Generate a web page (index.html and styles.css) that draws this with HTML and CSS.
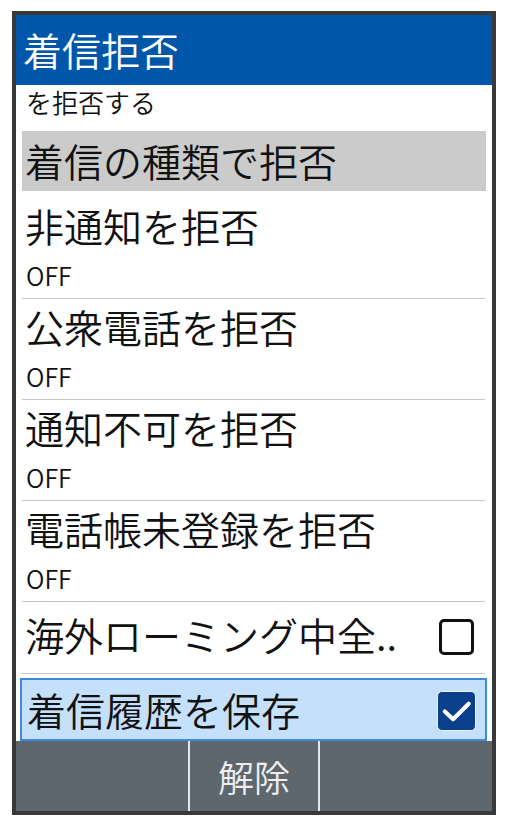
FILE: index.html
```html
<!DOCTYPE html>
<html lang="ja">
<head>
<meta charset="utf-8">
<title>着信拒否</title>
<link rel="stylesheet" href="styles.css">
</head>
<body>
<div class="phone">
  <header class="title-bar">着信拒否</header>
  <div class="list">
    <div class="desc">を拒否する</div>
    <div class="category">着信の種類で拒否</div>
    <div class="item">
      <div class="item-title">非通知を拒否</div>
      <div class="item-value">OFF</div>
    </div>
    <div class="item">
      <div class="item-title">公衆電話を拒否</div>
      <div class="item-value">OFF</div>
    </div>
    <div class="item">
      <div class="item-title">通知不可を拒否</div>
      <div class="item-value">OFF</div>
    </div>
    <div class="item">
      <div class="item-title">電話帳未登録を拒否</div>
      <div class="item-value">OFF</div>
    </div>
    <div class="check-item">
      <div class="item-title">海外ローミング中全..</div>
      <span class="checkbox"></span>
    </div>
    <div class="check-item focused">
      <div class="item-title">着信履歴を保存</div>
      <span class="checkbox checked">
        <svg viewBox="0 0 38 39" width="38" height="39"><path d="M7 19.5 L15.5 27.5 L31.5 11.5" fill="none" stroke="#fff" stroke-width="4.2" stroke-linecap="round" stroke-linejoin="round"/></svg>
      </span>
    </div>
  </div>
  <footer class="soft-keys">
    <div class="key"></div>
    <div class="key key-center">解除</div>
    <div class="key"></div>
  </footer>
</div>
</body>
</html>
```
FILE: styles.css
```css
html, body {
  margin: 0;
  padding: 0;
  background: #ffffff;
}

body {
  font-family: "Noto Sans CJK JP", "Noto Sans", sans-serif;
  font-weight: 350;
  color: #111111;
}

.phone {
  margin: 11px 0 0 12px;
  width: 476px;
  height: 796px;
  border: 4px solid #393939;
  display: flex;
  flex-direction: column;
  background: #ffffff;
}

.title-bar {
  height: 70px;
  flex: 0 0 70px;
  background: #0056a9;
  color: #ffffff;
  font-size: 39px;
  line-height: 68px;
  padding-left: 7px;
}

.list {
  flex: 1;
  overflow: hidden;
  display: flex;
  flex-direction: column;
}

.desc {
  height: 46px;
  flex: 0 0 46px;
  box-sizing: border-box;
  padding: 2px 0 0 10px;
  font-size: 26px;
  line-height: 30px;
}

.category {
  flex: 0 0 60px;
  height: 60px;
  margin: 0 6px 7px 6px;
  background: #cbcbcb;
  font-size: 39px;
  line-height: 59px;
  padding-left: 3px;
}

.item {
  flex: 0 0 auto;
  margin: 0 7px 0 6px;
  padding: 8px 0 10px 3px;
  border-bottom: 1px solid #c6c6c6;
  display: flex;
  flex-direction: column;
  gap: 18px;
}

.item-title {
  font-size: 39px;
  line-height: 39px;
  white-space: nowrap;
}

.item-value {
  font-size: 25px;
  line-height: 25px;
  padding-left: 1px;
}

.check-item {
  flex: 0 0 auto;
  margin: 0 7px 0 6px;
  height: 72px;
  box-sizing: border-box;
  padding: 13px 11px 0 3px;
  border-bottom: 1px solid #c6c6c6;
  display: flex;
  justify-content: space-between;
  align-items: flex-start;
}

.checkbox {
  margin-top: 4px;
  width: 35px;
  height: 36px;
  box-sizing: border-box;
  border: 3.5px solid #111111;
  border-radius: 5px;
  background: #ffffff;
}

.check-item.focused {
  margin: 4px 5px 0 4px;
  height: 63px;
  flex: 0 0 63px;
  padding: 10px 9px 0 5px;
  border: 2px solid #3d8ae0;
  background: #c5e0fb;
}

.checkbox.checked {
  margin-top: 1px;
  width: 39px;
  height: 40px;
  border: 1px solid #eef5ff;
  border-radius: 5px;
  background: #0a3f8c;
  display: flex;
  align-items: center;
  justify-content: center;
}

.checkbox.checked svg {
  display: block;
}

.soft-keys {
  flex: 0 0 70px;
  height: 70px;
  background: #5e676d;
  display: flex;
}

.key {
  flex: 0 0 172px;
}

.key-center {
  flex: 0 0 128px;
  border-left: 2px solid #e6e6e6;
  border-right: 2px solid #e6e6e6;
  color: #eeeeee;
  font-size: 36px;
  line-height: 70px;
  text-align: center;
}
```
